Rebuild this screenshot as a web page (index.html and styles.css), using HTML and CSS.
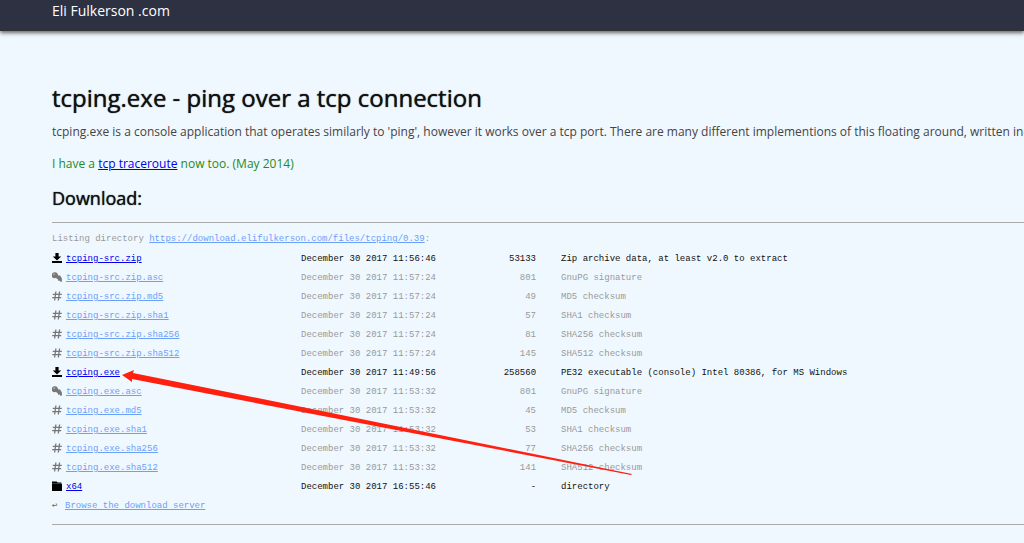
FILE: index.html
```html
<!DOCTYPE html>
<html lang="en">
<head>
    <meta charset="UTF-8">
    <meta name="viewport" content="width=device-width, initial-scale=1.0">
    <title>tcping.exe - ping over a tcp connection</title>
    <link rel="stylesheet" href="styles.css">
</head>
<body>
    <!-- icons used by the file listing -->
    <svg class="sprite" aria-hidden="true">
        <symbol id="download" viewBox="0 0 10 10">
            <path d="M3.4 0h3.2v3.4h2.6L5 7.4.8 3.4h2.6zM0 8h10v2H0z"/>
        </symbol>
        <symbol id="key" viewBox="0 0 10 10">
            <path fill-rule="evenodd" d="M3 .2a2.9 2.9 0 0 1 2.9 2.6l.6.6 1.6.2 1.7 2.6.2 3.2-1.5.4-.9-1.2-1.1.5-.9-2-.9-.3-.6-1A3 3 0 1 1 3 .2zM2.1 1.4a.7.7 0 1 0 0 1.4.7.7 0 0 0 0-1.4z"/>
        </symbol>
        <symbol id="hash" viewBox="0 0 10 10">
            <path d="M3.9.5 2.6 9.5M7.6.5 6.3 9.5M.8 3.3h9M.2 6.7h9" fill="none" stroke="currentColor" stroke-width="1.3"/>
        </symbol>
        <symbol id="folder" viewBox="0 0 10 10">
            <path d="M0 .4h4.6l1 1H9.4v1H0zM0 2.8h10V10H0z"/>
        </symbol>
    </svg>

    <header class="topbar">
        <a class="site-name" href="#">Eli Fulkerson .com</a>
    </header>

    <main class="content">
        <h1>tcping.exe - ping over a tcp connection</h1>
        <p class="intro">tcping.exe is a console application that operates similarly to 'ping', however it works over a tcp port. There are many different implementions of this floating around, written independently</p>
        <p class="news">I have a <a href="#">tcp traceroute</a> now too. (May 2014)</p>

        <h2>Download:</h2>
        <section class="listing">
            <p class="listing-path">Listing directory <a href="#">https://download.elifulkerson.com/files/tcping/0.39</a>:</p>
            <table class="files">
                <tbody>
                    <tr class="main-file">
                        <td><svg class="icon"><use href="#download"/></svg><a href="#">tcping-src.zip</a></td>
                        <td>December 30 2017 11:56:46</td>
                        <td class="size">53133</td>
                        <td>Zip archive data, at least v2.0 to extract</td>
                    </tr>
                    <tr>
                        <td><svg class="icon"><use href="#key"/></svg><a href="#">tcping-src.zip.asc</a></td>
                        <td>December 30 2017 11:57:24</td>
                        <td class="size">801</td>
                        <td>GnuPG signature</td>
                    </tr>
                    <tr>
                        <td><svg class="icon"><use href="#hash"/></svg><a href="#">tcping-src.zip.md5</a></td>
                        <td>December 30 2017 11:57:24</td>
                        <td class="size">49</td>
                        <td>MD5 checksum</td>
                    </tr>
                    <tr>
                        <td><svg class="icon"><use href="#hash"/></svg><a href="#">tcping-src.zip.sha1</a></td>
                        <td>December 30 2017 11:57:24</td>
                        <td class="size">57</td>
                        <td>SHA1 checksum</td>
                    </tr>
                    <tr>
                        <td><svg class="icon"><use href="#hash"/></svg><a href="#">tcping-src.zip.sha256</a></td>
                        <td>December 30 2017 11:57:24</td>
                        <td class="size">81</td>
                        <td>SHA256 checksum</td>
                    </tr>
                    <tr>
                        <td><svg class="icon"><use href="#hash"/></svg><a href="#">tcping-src.zip.sha512</a></td>
                        <td>December 30 2017 11:57:24</td>
                        <td class="size">145</td>
                        <td>SHA512 checksum</td>
                    </tr>
                    <tr class="main-file">
                        <td><svg class="icon"><use href="#download"/></svg><a href="#">tcping.exe</a></td>
                        <td>December 30 2017 11:49:56</td>
                        <td class="size">258560</td>
                        <td>PE32 executable (console) Intel 80386, for MS Windows</td>
                    </tr>
                    <tr>
                        <td><svg class="icon"><use href="#key"/></svg><a href="#">tcping.exe.asc</a></td>
                        <td>December 30 2017 11:53:32</td>
                        <td class="size">801</td>
                        <td>GnuPG signature</td>
                    </tr>
                    <tr>
                        <td><svg class="icon"><use href="#hash"/></svg><a href="#">tcping.exe.md5</a></td>
                        <td>December 30 2017 11:53:32</td>
                        <td class="size">45</td>
                        <td>MD5 checksum</td>
                    </tr>
                    <tr>
                        <td><svg class="icon"><use href="#hash"/></svg><a href="#">tcping.exe.sha1</a></td>
                        <td>December 30 2017 11:53:32</td>
                        <td class="size">53</td>
                        <td>SHA1 checksum</td>
                    </tr>
                    <tr>
                        <td><svg class="icon"><use href="#hash"/></svg><a href="#">tcping.exe.sha256</a></td>
                        <td>December 30 2017 11:53:32</td>
                        <td class="size">77</td>
                        <td>SHA256 checksum</td>
                    </tr>
                    <tr>
                        <td><svg class="icon"><use href="#hash"/></svg><a href="#">tcping.exe.sha512</a></td>
                        <td>December 30 2017 11:53:32</td>
                        <td class="size">141</td>
                        <td>SHA512 checksum</td>
                    </tr>
                    <tr class="main-file">
                        <td><svg class="icon"><use href="#folder"/></svg><a href="#">x64</a></td>
                        <td>December 30 2017 16:55:46</td>
                        <td class="size">-</td>
                        <td>directory</td>
                    </tr>
                </tbody>
            </table>
            <p class="browse"><span class="back">↩</span><a href="#">Browse the download server</a></p>

            <!-- arrow pointing at tcping.exe -->
            <svg class="arrow" viewBox="0 0 510 106" aria-hidden="true">
                <path d="M0 5 12 0 11 3 180 37 510 104 509 105 180 42 10 9 10 12z"/>
            </svg>
        </section>
    </main>
</body>
</html>
```
FILE: styles.css
```css
body {
    margin: 0;
    background-color: #f0f8ff;
    color: #444;
    font-family: 'Open Sans', sans-serif;
    font-size: 12px;
    line-height: 18px;
}
a {
    color: #00e;
}
.sprite {
    display: none;
}
.topbar {
    height: 30px;
    padding-left: 52px;
    background-color: #2d3142;
    border-bottom: 1px solid #333;
    box-shadow: 0 2px 4px #666;
}
.site-name {
    color: #fff;
    font-size: 14px;
    line-height: 22px;
    text-decoration: none;
}
.content {
    padding: 50px 0 0 52px;
    overflow: hidden;
}
h1, h2 {
    margin: 0;
    color: #111;
    font-weight: 500;
    text-shadow: 0 0 1px #111;
}
h1 {
    font-size: 24px;
    line-height: 34px;
}
h2 {
    font-size: 18px;
    line-height: 24px;
    margin-top: 13px;
}
p {
    margin: 0;
}
.intro {
    margin-top: 8px;
    white-space: nowrap;
}
.news {
    margin-top: 14px;
    color: #228b22;
}
.listing {
    position: relative;
    margin-top: 12px;
    padding: 6px 0 8px;
    border: 1px solid #aaa;
    border-width: 1px 0;
    color: #999;
    font-family: 'Liberation Mono', monospace;
    font-size: 9px;
    line-height: 20px;
}
.listing a {
    color: #6c9ffa;
}
.files {
    border-collapse: collapse;
    white-space: nowrap;
}
.files td {
    height: 19px;
    padding: 0 25px 0 0;
    line-height: 18px;
}
.files td:first-child {
    width: 224px;
}
.files .size {
    width: 75px;
    text-align: right;
}
.main-file {
    color: #111;
}
.files .main-file a {
    color: #00e;
}
.icon {
    width: 10px;
    height: 10px;
    margin-right: 4px;
    vertical-align: -2px;
    color: #777;
    fill: currentColor;
}
.main-file .icon {
    color: #000;
}
.back {
    display: inline-block;
    width: 13px;
    color: #666;
}
.arrow {
    position: absolute;
    top: 147px;
    left: 70px;
    width: 510px;
    height: 106px;
    fill: #ff2010;
    pointer-events: none;
}
```
